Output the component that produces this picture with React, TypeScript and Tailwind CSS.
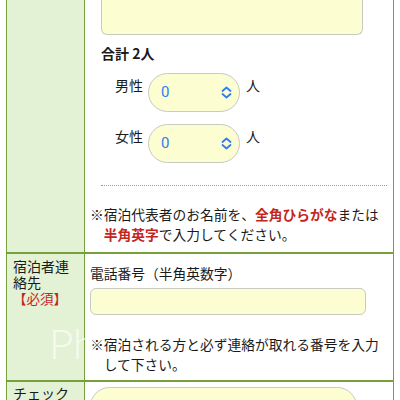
import React from 'react';

// Reservation form: guest count, notes and contact rows in a bordered table

const JP = { fontFamily: '"Noto Sans CJK JP", "Noto Sans", sans-serif' };

const Chevrons: React.FC = () => (
  <svg width="11" height="13" viewBox="0 0 11 13" fill="none" stroke="#2f7cf6" strokeWidth="1.8" strokeLinecap="round" strokeLinejoin="round">
    <path d="M1.5 5 L5.5 1.5 L9.5 5" />
    <path d="M1.5 8 L5.5 11.5 L9.5 8" />
  </svg>
);

const CountSelect: React.FC<{ label: string }> = ({ label }) => (
  <div className="flex items-start">
    <span className="ml-[14px] mt-[2px] w-[28px] text-[14px] leading-[20px] text-[#1a1a1a]">{label}</span>
    <div className="ml-[5px] flex h-[39px] w-[92px] items-center justify-between rounded-full border border-[#c9c9c4] bg-[#fdfdd2] pl-[12px] pr-[7px]">
      <span className="text-[15px] text-[#2f7cf6]" style={{ fontFamily: 'Roboto, sans-serif' }}>0</span>
      <Chevrons />
    </div>
    <span className="ml-[6px] mt-[2px] text-[14px] leading-[20px] text-[#1a1a1a]">人</span>
  </div>
);

const Note: React.FC<{ children: React.ReactNode }> = ({ children }) => (
  <p className="pl-[1em] -indent-[1em] text-[13.75px] leading-[20px] text-[#1a1a1a]">{children}</p>
);

export default function App() {
  return (
    <div className="relative h-[400px] w-[400px] overflow-hidden bg-white" style={JP}>
      <div className="ml-[6px] w-[388px] border-x border-[#76a13a]">
        {/* guests */}
        <div className="flex">
          <div className="w-[78px] border-r border-[#76a13a] bg-[#e3f2d4]" />
          <div className="flex-1 pl-[5px] pr-[5px]">
            <div className="ml-[11px] h-[35px] w-[262px] rounded-b-[6px] border-x border-b border-[#c9c9c4] bg-[#fdfdd2]" />
            <div className="ml-[11px] mt-[8px]">
              <p className="text-[14px] font-bold leading-[20px] text-[#1a1a1a]">合計&nbsp;2人</p>
              <div className="mt-[10px] flex flex-col gap-[12px]">
                <CountSelect label="男性" />
                <CountSelect label="女性" />
              </div>
              <div className="mt-[22px] mr-[1px] border-t border-dotted border-[#9a9a9a]" />
            </div>
            <div className="mt-[18px] pb-[8px]">
              <Note>
                ※宿泊代表者のお名前を、<span className="font-bold text-[#c4261d]">全角ひらがな</span>または
                <span className="font-bold text-[#c4261d]">半角英字</span>で入力してください。
              </Note>
            </div>
          </div>
        </div>

        {/* contact */}
        <div className="flex border-t-2 border-[#76a13a]">
          <div className="w-[78px] border-r border-[#76a13a] bg-[#e3f2d4] px-[6px] pt-[4px] text-[14px] leading-[16px] text-[#1a1a1a]">
            宿泊者連<br />絡先<br />
            <span className="text-[13.5px] text-[#c4261d]">【必須】</span>
          </div>
          <div className="flex-1 px-[5px] pb-[6px]">
            <p className="mt-[9px] text-[13.75px] leading-[20px] text-[#1a1a1a]">電話番号（半角英数字）</p>
            <div className="mt-[5px] h-[27px] w-[276px] rounded-[6px] border border-[#c9c9c4] bg-[#fdfdd2]" />
            <div className="mt-[19px]">
              <Note>※宿泊される方と必ず連絡が取れる番号を入力して下さい。</Note>
            </div>
          </div>
        </div>

        {/* check-in */}
        <div className="flex border-t-2 border-[#76a13a]">
          <div className="w-[78px] border-r border-[#76a13a] bg-[#e3f2d4] px-[6px] pt-[3px] text-[14px] leading-[16px] text-[#1a1a1a]">
            チェック
          </div>
          <div className="flex-1 px-[5px] pb-[10px]">
            <div className="mt-[5px] h-[39px] w-[267px] rounded-full border border-[#c9c9c4] bg-[#fdfdd2]" />
          </div>
        </div>
      </div>

      {/* watermark */}
      <span className="pointer-events-none absolute left-[49px] top-[312px] text-[42px] font-light text-white/70" style={{ fontFamily: 'Lato, sans-serif' }}>
        Ph
      </span>
    </div>
  );
}
